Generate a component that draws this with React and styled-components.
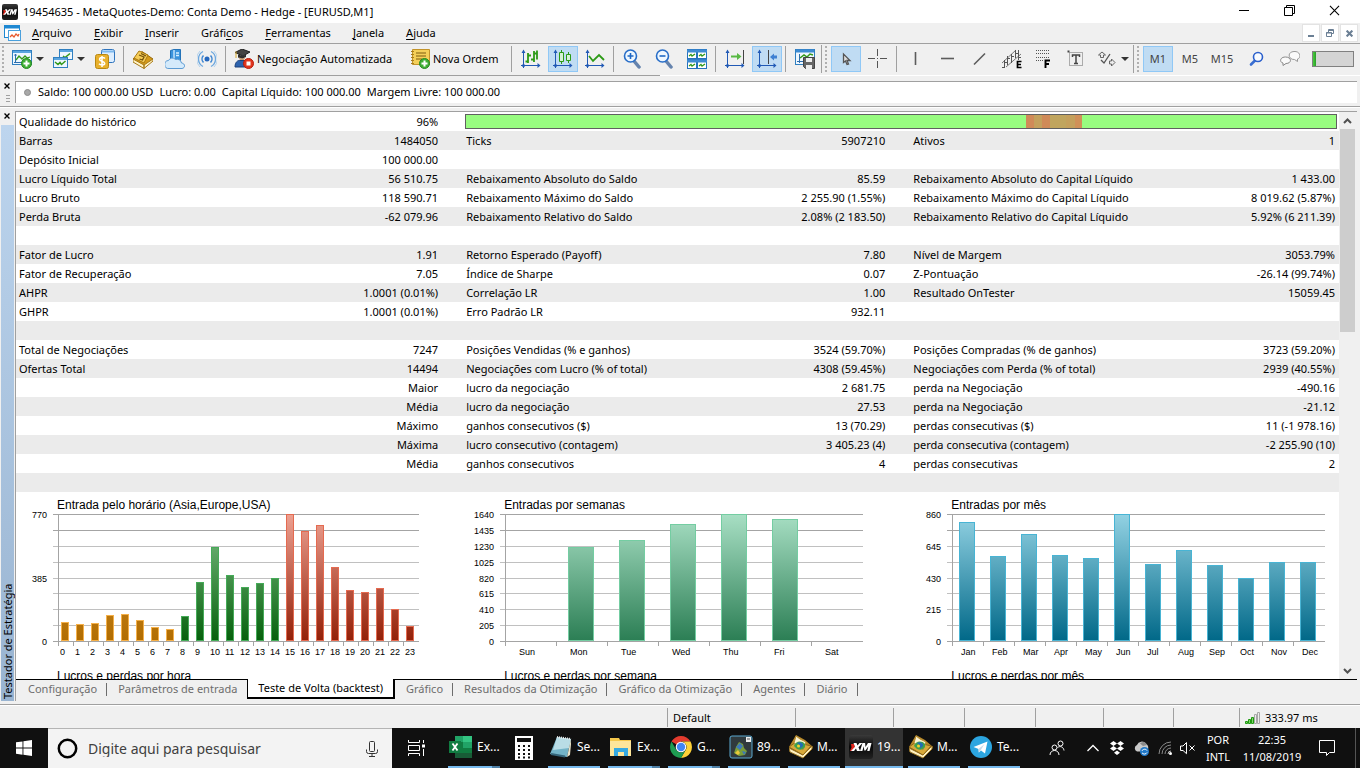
import React from "react";
import styled, { createGlobalStyle, css } from "styled-components";

const GlobalStyle = createGlobalStyle`
  * {
    box-sizing: border-box;
  }

  body {
    background: #f0f0f0;
    color: #000000;
    font-family: "Noto Sans", "Open Sans", sans-serif;
    font-size: 11px;
    line-height: 16px;
    margin: 0;
    overflow: hidden;
  }

  button,
  input {
    background: none;
    border: 0;
    color: inherit;
    font: inherit;
    margin: 0;
    padding: 0;
  }

  svg {
    display: block;
    flex: none;
  }
`;

const Shell = styled.div`
  display: flex;
  flex-direction: column;
  height: 100vh;
`;

/* ---------- title bar and menu ---------- */

const TitleBar = styled.header`
  align-items: center;
  background: #ffffff;
  display: flex;
  flex: none;
  height: 23px;
  padding: 0 3px 0 2px;
`;

const Title = styled.h1`
  flex: 1;
  font-size: 11px;
  font-weight: 400;
  margin: 0 0 0 5px;
`;

const WindowButton = styled.button`
  align-items: center;
  display: flex;
  height: 23px;
  justify-content: center;
  padding-bottom: 2px;
  width: 45px;
`;

const MenuBar = styled.nav`
  align-items: center;
  border-bottom: 1px solid #a0a0a0;
  display: flex;
  flex: none;
  height: 21px;
  padding: 0 2px 0 4px;
`;

const MenuItem = styled.button`
  height: 20px;
  padding: 0 11px;

  &:first-of-type {
    margin-left: -1px;
  }

  u {
    text-underline-offset: 2px;
  }
`;

const ChildControls = styled.div`
  display: flex;
  gap: 1px;
  margin-left: auto;
`;

const ChildButton = styled.button`
  align-items: center;
  background: #ffffff;
  border: 1px solid #e3e3e3;
  display: flex;
  height: 18px;
  justify-content: center;
  width: 18px;
`;

/* ---------- toolbar ---------- */

const ToolbarRow = styled.div`
  align-items: center;
  background: linear-gradient(90deg, #a0a0a0 48.5%, #ffffff 48.5%) 0 31px / 100% 1px no-repeat;
  display: flex;
  flex: none;
  height: 33px;
  padding-bottom: 3px;
`;

const ToolGroup = styled.div`
  align-items: center;
  border-right: ${({ $last }) => ($last ? "0" : "1px solid #a0a0a0")};
  display: flex;
  height: 28px;
`;

const Grip = styled.span`
  background-image: radial-gradient(circle, #b0b0b0 1px, transparent 1px);
  background-size: 4px 4px;
  height: 28px;
  margin: 0 2px 0 ${({ $wide }) => ($wide ? "2px" : "1px")};
  width: 4px;
`;

const Tool = styled.button`
  align-items: center;
  display: flex;
  height: 26px;
  justify-content: center;
  margin: 0 1px;
  width: 30px;
  ${({ $active }) =>
    $active &&
    css`
      background: #c0dcf3;
      box-shadow: inset 0 0 0 1px #90c8f6;
    `}
`;

const DropTool = styled(Tool)`
  gap: 4px;
  width: 39px;
`;

const LabelTool = styled(Tool)`
  gap: 3px;
  justify-content: flex-start;
  min-width: ${({ $wide }) => ($wide ? "174px" : "102px")};
  padding-left: 4px;
  white-space: nowrap;
  width: auto;
`;

const PeriodTool = styled(Tool)`
  color: #444444;
`;

const Extras = styled.div`
  align-items: center;
  display: flex;
  gap: 1px;
  padding-left: 3px;
`;

const Divider = styled.span`
  background: #a0a0a0;
  height: 26px;
  margin: 0 3px 0 2px;
  width: 1px;
`;

const Caret = styled.span`
  border: 4px solid transparent;
  border-bottom: 0;
  border-top-color: #333333;
  width: 0;
`;

const TrafficMeter = styled.div`
  background: #d4d4d4;
  border: 1px solid #808080;
  height: 16px;
  margin-left: 5px;
  width: 42px;

  span {
    background: linear-gradient(90deg, #48d03c, #2a9a2a);
    display: block;
    height: 14px;
    width: 3px;
  }
`;

/* ---------- docked panels ---------- */

const Dock = styled.section`
  border-bottom: ${({ $fill }) => ($fill ? "0" : "1px solid #a0a0a0")};
  box-shadow: ${({ $fill }) => ($fill ? "inset 0 1px 0 #ffffff" : "none")};
  display: flex;
  flex: ${({ $fill }) => ($fill ? "1" : "none")};
  min-height: 0;
  padding: 4px 3px 3px 0;
`;

const DockHandle = styled.div`
  align-items: center;
  display: flex;
  flex: none;
  flex-direction: column;
  width: 15px;
`;

const DockClose = styled.button`
  display: flex;
  padding: 2px 2px 6px 0;
`;

const DockLines = styled.span`
  background: repeating-linear-gradient(#a0a0a0 0 1px, transparent 1px 3px);
  height: 7px;
  width: 4px;
`;

const DockTitle = styled.div`
  align-self: stretch;
  background: linear-gradient(#99b4d1, #bdd5ee);
  display: flex;
  flex: 1;
  justify-content: flex-start;
  line-height: 13px;
  margin: 0 1px;
  padding-top: 2px;
  transform: rotate(180deg);
  writing-mode: vertical-rl;
`;

const AccountLine = styled.div`
  align-items: center;
  background: #ffffff;
  border-left: 1px solid #a0a0a0;
  border-top: 1px solid #a0a0a0;
  display: flex;
  flex: 1;
  gap: 7px;
  height: 22px;
  padding: 0 0 1px 8px;
  white-space: nowrap;
`;

const AccountFigures = styled.div`
  display: flex;
  gap: 6px;
`;

const Tester = styled.div`
  border-left: 1px solid #a0a0a0;
  border-top: 1px solid #a0a0a0;
  display: flex;
  flex: 1;
  flex-direction: column;
  min-width: 0;
`;

const ReportArea = styled.div`
  display: flex;
  flex: 1;
  min-height: 0;
  padding-right: 1px;
`;

const Report = styled.div`
  background: #ffffff;
  flex: 1;
  min-width: 0;
  overflow: hidden;
`;

const ReportTable = styled.table`
  border-collapse: collapse;
  table-layout: fixed;
  width: 100%;

  tr {
    height: 19px;
  }

  tr:nth-child(even) {
    background: #ebebeb;
  }

  th,
  td {
    font-weight: 400;
    height: 19px;
    line-height: 19px;
    padding: 0 0 0 3px;
    text-align: left;
    white-space: nowrap;
  }

  td {
    padding-right: 25px;
    text-align: right;
  }

  td:last-child {
    padding-right: 4px;
  }
`;

const Col = styled.col`
  width: ${({ $width }) => $width};
`;

const QualityCell = styled.td`
  &&& {
    padding: 0 2px;
  }
`;

const QualityBar = styled.div`
  background: linear-gradient(
    90deg,
    #98fc80 0 64.4%,
    #d08a58 64.4% 65.3%,
    #c4a05c 65.3% 66.2%,
    #d08a58 66.2% 67.1%,
    #c0a55e 67.1% 69%,
    #c4a05c 69% 70%,
    #d09058 70% 70.8%,
    #98fc80 70.8%
  );
  border: 1px solid #606060;
  height: 15px;
`;

const ChartGrid = styled.div`
  display: grid;
  grid-template-columns: 33.8% 33.8% 1fr;
`;

const ChartBox = styled.figure`
  height: 171px;
  margin: 0;
  overflow: hidden;
  padding-top: 5px;

  svg {
    font-family: "Liberation Sans", Arial, sans-serif;
    font-size: 9px;
    overflow: visible;
  }
`;

const ChartTitle = styled.figcaption`
  font-family: "Liberation Sans", Arial, sans-serif;
  font-size: 12px;
  padding-left: 41px;
`;

const Scrollbar = styled.div`
  background: #f0f0f0;
  display: flex;
  flex: none;
  flex-direction: column;
  margin: 0 1px;
  width: 15px;
`;

const ScrollArrow = styled.button`
  align-items: center;
  display: flex;
  flex: none;
  height: 17px;
  justify-content: center;
`;

const ScrollTrack = styled.div`
  flex: 1;
`;

const ScrollThumb = styled.div`
  background: #cdcdcd;
  height: 38%;
`;

const TabBar = styled.div`
  border-top: 1px solid #000000;
  color: #6d6d6d;
  display: flex;
  flex: none;
  height: 22px;
  padding-left: 1px;
`;

const Tab = styled.button`
  height: 18px;
  padding: 0 10px 1px 11px;
  position: relative;
  white-space: nowrap;

  &::after {
    background: #6d6d6d;
    content: "";
    height: 13px;
    position: absolute;
    right: 0;
    top: 3px;
    width: 1px;
  }

  ${({ $beforeActive }) =>
    $beforeActive &&
    css`
      &::after {
        display: none;
      }
    `}

  ${({ $active }) =>
    $active &&
    css`
      background: #ffffff;
      border: 2px solid #000000;
      border-top: 0;
      border-left-width: 1px;
      color: #000000;
      height: 20px;
      margin-top: -1px;
      padding: 0 10px;

      &::after {
        display: none;
      }
    `}
`;

/* ---------- status bar ---------- */

const StatusBar = styled.footer`
  border-top: 1px solid #a0a0a0;
  box-shadow: inset 0 1px 0 #ffffff;
  display: flex;
  flex: none;
  height: 24px;
  padding-top: 3px;
`;

const StatusCell = styled.div`
  align-items: center;
  border-left: ${({ $plain }) => ($plain ? "0" : "1px solid #a0a0a0")};
  display: flex;
  flex: ${({ $width }) => ($width ? `0 0 ${$width}px` : "1")};
  gap: 4px;
  height: 19px;
  padding: 0 5px;
`;

/* ---------- taskbar ---------- */

const Taskbar = styled.footer`
  align-items: stretch;
  background: #101010;
  color: #ffffff;
  display: flex;
  flex: none;
  height: 40px;
`;

const TaskButton = styled.button`
  align-items: center;
  display: flex;
  justify-content: center;
  width: ${({ $width }) => $width}px;
`;

const Search = styled.label`
  align-items: center;
  background: #f3f3f3;
  border-top: 1px solid #b4b4b4;
  color: #333333;
  display: flex;
  flex: 0 0 344px;
  gap: 10px;
  padding: 0 13px 0 9px;

  input {
    flex: 1;
    font-size: 14px;
    min-width: 0;
    outline: 0;
  }

  input::placeholder {
    color: #404040;
    opacity: 1;
  }
`;

const Apps = styled.div`
  display: flex;
  padding-left: 4px;
`;

const AppButton = styled.button`
  align-items: center;
  background: ${({ $active }) => ($active ? "#333333" : "none")};
  border-bottom: 2px solid #76b9ed;
  display: flex;
  font-size: 12px;
  gap: 4px;
  height: 40px;
  margin: 0 ${({ $active }) => ($active ? "1px" : "4px")};
  padding: 0 ${({ $active }) => ($active ? "4px" : "1px")};
  white-space: nowrap;
  width: ${({ $active }) => ($active ? "58px" : "52px")};
  ${({ $stacked }) =>
    $stacked &&
    css`
      border-image: linear-gradient(90deg, #76b9ed 83%, #4e7fa5 83%) 1;
      border-width: 0 0 2px;
      border-style: solid;
    `}
`;

const Tray = styled.div`
  align-items: center;
  border-right: 1px solid #555555;
  display: flex;
  margin-left: auto;
  margin-right: 4px;
`;

const TrayButton = styled.button`
  align-items: center;
  display: flex;
  height: 40px;
  justify-content: center;
  width: ${({ $width }) => $width || 24}px;
`;

const TrayText = styled.div`
  font-size: 11px;
  line-height: 17px;
  text-align: center;
  width: ${({ $width }) => $width}px;
`;

/* ---------- icons ---------- */

const Icon = ({ size = 20, w, h, box, children }) => (
  <svg
    width={w || size}
    height={h || size}
    viewBox={box || `0 0 ${w || size} ${h || size}`}
    fill="none"
    aria-hidden="true"
  >
    {children}
  </svg>
);

const XmMark = ({ size }) => (
  <Icon size={size} box="0 0 24 24">
    <defs>
      <linearGradient id="xm" x1="0" y1="0" x2="0" y2="1">
        <stop offset="0" stopColor="#3a3a3a" />
        <stop offset=".5" stopColor="#080808" />
        <stop offset="1" stopColor="#222222" />
      </linearGradient>
    </defs>
    <rect width="24" height="24" rx="3" fill="url(#xm)" />
    <path d="M2 9h3l1 3-3 4H1l1.500-3.500z" fill="#e2261c" />
    <path d="M4.500 8h3l1 2.500L10.500 8h3l-4 4.200 1.600 3.800H8l-1-2.400L5 16H2l4-4.300zM13.500 8h2.600l.4 4L19 8h3.500l-2 8h-2.300l1.200-4.800-2.900 4.400h-1.200l-.6-4.400-1.300 4.800H11z" fill="#ffffff" />
  </Icon>
);

const Axis = ({ children }) => (
  <Icon>
    <path d="M2.500 2v17M0 16.500h19" stroke="#2159b5" />
    <path d="M.5 4l2-3.500 2 3.500zM16.500 14l3 2.500-3 2.500z" fill="#2159b5" />
    <circle cx="2.500" cy="16.500" r="1.500" fill="#2159b5" />
    {children}
  </Icon>
);

const PlusBadge = () => (
  <g>
    <circle cx="14.500" cy="14.500" r="5" fill="#3fae34" stroke="#24891f" />
    <path d="M14.500 11.500v6M11.500 14.500h6" stroke="#fff" strokeWidth="2" />
  </g>
);

const NewChartIcon = () => (
  <Icon>
    <rect x=".5" y="1.500" width="19" height="14" fill="#eef7ff" stroke="#2f7fc0" />
    <path d="M1 3h18" stroke="#5aa5df" strokeWidth="2" />
    <path d="M3.500 5v9M2 13.500h14M2.500 6.500l1-1.500 1 1.500" stroke="#2f6fae" />
    <path d="M4 11l3-4 3 3 3-3 2 2 3-1" stroke="#33991a" strokeWidth="1.300" />
    <PlusBadge />
  </Icon>
);

const WindowsIcon = () => (
  <Icon>
    <rect x="6.500" y=".5" width="13" height="10" fill="#eef7ff" stroke="#2f7fc0" />
    <path d="M7 2h12" stroke="#5aa5df" strokeWidth="2" />
    <path d="M10 7l2 1.500L17 4.500" stroke="#33991a" strokeWidth="1.500" />
    <rect x=".5" y="8.500" width="14" height="10" fill="#eef7ff" stroke="#2f7fc0" />
    <path d="M1 10h13" stroke="#5aa5df" strokeWidth="2" />
    <path d="M2 13l3 2.500 2-2 1.500 2 4-3.500" stroke="#33991a" strokeWidth="1.500" />
  </Icon>
);

const SymbolsIcon = () => (
  <Icon>
    <rect x="6.500" y=".5" width="13" height="13" rx="2" fill="#ddeeff" stroke="#2f74bd" />
    <path d="M7 2.500h12" stroke="#7cb9ee" strokeWidth="2" />
    <rect x=".5" y="5.500" width="13" height="14" rx="2" fill="#e8b02c" stroke="#b98812" />
    <path d="M10 9.500C8.500 8 4.500 8.200 4.600 10.500c.1 2.200 5 1.300 5.100 3.800.1 2-4 2.200-5.700.4M7 7v11" stroke="#fff" strokeWidth="1.500" />
  </Icon>
);

const BookIcon = () => (
  <Icon>
    <path d="M0 10l9-7.500L20 10l-9 8z" fill="#d59b1b" stroke="#96690c" />
    <path d="M0 10v3l11 6.500v-3.500zM11 16v3.500l9-7.500v-2z" fill="#fff3c7" stroke="#a87a16" />
    <path d="M1 9l5-7 9 4-4 8z" fill="#f5cd58" stroke="#aa7a12" />
    <path d="M6 6l5 2-1.500 3-3-1M8 4.500l5 2.500" stroke="#71500c" strokeWidth="1.300" />
  </Icon>
);

const CloudServerIcon = () => (
  <Icon>
    <path d="M5.500 1.500L9 .5h6.500v11h-10z" fill="#3b94dd" stroke="#2473b8" />
    <path d="M9 1v10M11 4h3M11 6.500h3" stroke="#d7efff" strokeWidth="1.300" />
    <path d="M4 19.500a4 4 0 01-.5-8 4.200 4.200 0 017-1 4.500 4.500 0 016 3.500c4 .5 4 5 .5 5.500z" fill="#d4eafb" stroke="#5c9bd3" />
  </Icon>
);

const SignalIcon = () => (
  <Icon>
    <circle cx="10" cy="10" r="2.500" fill="#2567bd" />
    <path d="M6.500 6.500a5 5 0 000 7M13.500 6.500a5 5 0 010 7" stroke="#3f87d2" strokeWidth="1.600" />
    <path d="M6 2.500a8.500 8.500 0 000 15M14 2.500a8.500 8.500 0 010 15" stroke="#6da8df" strokeWidth="1.300" />
    <path d="M3 2a11 11 0 000 16M17 2a11 11 0 010 16" stroke="#b3d1ec" />
  </Icon>
);

const AlgoIcon = () => (
  <Icon>
    <path d="M1 3.500L8 0l8 3-7 4z" fill="#444" stroke="#222" />
    <path d="M4 5.500v3l4 1.500 4-2V5.500L9 7z" fill="#2e2e2e" />
    <path d="M5 8.500c0 4 6 4 6 0l-2.500 1z" fill="#c89c72" />
    <path d="M1 18c0-5 3-7 5-6.500h5c2 0 4 2 4 6.500z" fill="#2d63ae" stroke="#1c417a" />
    <path d="M2 2.500V9" stroke="#d4a72b" />
    <circle cx="14.500" cy="14.500" r="5" fill="#e2361f" stroke="#b81d0d" />
    <rect x="12.500" y="12.500" width="4" height="4" fill="#fff" />
  </Icon>
);

const NewOrderIcon = () => (
  <Icon>
    <path d="M2.500.500h17v15h-17z" fill="#f4cf59" stroke="#c2932a" />
    <path d="M6 4h10M6 7h10M6 10h6" stroke="#7d5c11" />
    <path d="M1 2.500h3M1 5.500h3M1 8.500h3M1 11.500h3M1 14.500h3" stroke="#a87d1c" />
    <PlusBadge />
  </Icon>
);

const MagnifierIcon = ({ minus }) => (
  <Icon>
    <path d="M11 12l5 6" stroke="#6583ad" strokeWidth="3.500" strokeLinecap="round" />
    <circle cx="7.500" cy="7" r="6" fill="#eef7ff" stroke="#276dc8" strokeWidth="1.600" />
    <path d={minus ? "M4.500 7h6" : "M4.500 7h6M7.500 4v6"} stroke="#1f67c4" strokeWidth="1.600" />
  </Icon>
);

const TileIcon = () => (
  <Icon>
    {[0, 10].map((x) =>
      [0, 10].map((y) => (
        <g key={`${x}-${y}`}>
          <rect x={x + 0.5} y={y + 0.5} width="9" height="9" fill="#fff" stroke="#2472bd" />
          <path d={`M${x} ${y + 2}h10`} stroke="#3d8bd2" strokeWidth="3" />
          <path d={`M${x + 2} ${y + 7}l2-1.500 1 1.500 3-2`} stroke="#2f991a" strokeWidth="1.300" />
        </g>
      )),
    )}
  </Icon>
);

const TemplateIcon = () => (
  <Icon>
    <rect x=".5" y=".5" width="19" height="15" fill="#eef7ff" stroke="#2f7fc0" />
    <path d="M1 2h18" stroke="#3c8bd3" strokeWidth="3" />
    <path d="M4.500 5v9M2 12.500h6" stroke="#2f6fae" />
    <path d="M5 9l4-3 3 2 3-3 3 1" stroke="#33991a" strokeWidth="1.500" />
    <path d="M8.500 8.500h11v11h-9l-2-2z" fill="#666" stroke="#444" />
    <path d="M11 9h6v4h-6zM11 16h6v4h-6z" fill="#eee" />
  </Icon>
);

const CursorIcon = () => (
  <Icon>
    <path d="M7.500 5v8.500l2-1.500 1.500 3.500 1.500-.5-1.500-3.500h3z" fill="#ddd" stroke="#555" strokeWidth="1.300" />
  </Icon>
);

const CrosshairIcon = () => (
  <Icon>
    <path d="M9.500 0v7M9.500 12v7M0 9.500h7M12 9.500h7M9 9.500h1" stroke="#555" />
  </Icon>
);

const StrokeIcon = ({ d }) => (
  <Icon>
    <path d={d} stroke="#5c5c5c" strokeWidth="1.600" />
  </Icon>
);

const ChannelIcon = () => (
  <Icon>
    <path d="M0 14L14 1M4 18L19 5" stroke="#777" />
    <path d="M2.500 19v-8M0 18.500h2M5.500 16V7M3 13.500h2M5 9.500h3M9.500 14V5M9 7.500h3M13.500 9V1M13 4.500h3M16.500 11V1M16 8.500h3" stroke="#555" />
    <path d="M19.500 12.500H15.500v6h4M15 15.500h4" stroke="#000" strokeWidth="1.700" />
  </Icon>
);

const FiboIcon = () => (
  <Icon>
    <path d="M2 1.500h13M2 4.500h13M2 8.500h13M2 11.500h8" stroke="#555" strokeDasharray="1 1" />
    <path d="M16 11.500h-4.500V19M11.500 15H15" stroke="#000" strokeWidth="1.900" />
  </Icon>
);

const TextToolIcon = () => (
  <Icon>
    <rect x="3.500" y="3.500" width="13" height="13" stroke="#666" strokeDasharray="1 1" />
    <path d="M1.500 1.500h2v2h-2z" fill="#444" />
    <path d="M6.500 8V6h7v2M10 6v8M8 14.500h4" stroke="#444" strokeWidth="1.500" />
  </Icon>
);

const ArrowsIcon = () => (
  <Icon>
    <path d="M5 3L1.500 6h2v2.500h3V6h2zM14.500 10v2h-2v3h2v2l3.500-3.500z" fill="#eee" stroke="#666" />
    <path d="M4 11l3 3 6-9" stroke="#555" strokeWidth="1.300" />
  </Icon>
);

const FindIcon = () => (
  <Icon>
    <path d="M8 11.500l-4 4" stroke="#3a6ed1" strokeWidth="2.600" strokeLinecap="round" />
    <circle cx="11" cy="8" r="4.500" fill="#f8fbff" stroke="#2b60cc" strokeWidth="1.600" />
  </Icon>
);

const ChatIcon = () => (
  <Icon>
    <path d="M14 2.500c7-.5 7 7 3.500 7.500v2.500l-3-2c-6 .5-8-7.500-.5-8z" fill="#fafafa" stroke="#999" />
    <path d="M5.500 8c-6 0-6 5.500-2.500 6v2.500L6 14.500c6 0 6-6.500-.5-6.500z" fill="#fafafa" stroke="#888" />
  </Icon>
);

const CloseMark = ({ size = 7, color = "#000", width = 1.8 }) => (
  <Icon size={size} box="0 0 8 8">
    <path d="M.7.700l6.600 6.600M7.300.700L.7 7.300" stroke={color} strokeWidth={width} />
  </Icon>
);

const ExpertIcon = () => (
  <Icon size={24}>
    <path d="M0 12L7 0l9 5 8 7-10 11z" fill="#b98a28" />
    <path d="M0 13l1 4 13 6 9-9v-3l-9 9z" fill="#fff1c2" stroke="#9b7625" />
    <path d="M0 12l7-5 15 4-8 9z" fill="#d8a93a" stroke="#8a651a" />
    <path d="M5 8L7 1l4 3 6 3-3 8z" fill="#fbf3d4" stroke="#b68c32" />
    <path d="M5 11c1-5 8-6 11-2 1 4-3 7-8 5z" fill="#3fa14c" />
    <path d="M8 8c3-2 7 0 6 3l-3 3c1-3-1-4-3-6z" fill="#226fb4" />
    <circle cx="9.500" cy="11" r="1.500" fill="#f4d22b" />
  </Icon>
);

/* ---------- data ---------- */

const MENU = [
  ["", "A", "rquivo"],
  ["", "E", "xibir"],
  ["", "I", "nserir"],
  ["Gráfi", "c", "os"],
  ["", "F", "erramentas"],
  ["", "J", "anela"],
  ["", "A", "juda"],
];

const FIGURES = [
  "Saldo: 100 000.00 USD",
  "Lucro: 0.00",
  "Capital Líquido: 100 000.00",
  "Margem Livre: 100 000.00",
];

const ROWS = [
  ["Barras", "1484050", "Ticks", "5907210", "Ativos", "1"],
  ["Depósito Inicial", "100 000.00", "", "", "", ""],
  ["Lucro Líquido Total", "56 510.75", "Rebaixamento Absoluto do Saldo", "85.59", "Rebaixamento Absoluto do Capital Líquido", "1 433.00"],
  ["Lucro Bruto", "118 590.71", "Rebaixamento Máximo do Saldo", "2 255.90 (1.55%)", "Rebaixamento Máximo do Capital Líquido", "8 019.62 (5.87%)"],
  ["Perda Bruta", "-62 079.96", "Rebaixamento Relativo do Saldo", "2.08% (2 183.50)", "Rebaixamento Relativo do Capital Líquido", "5.92% (6 211.39)"],
  ["", "", "", "", "", ""],
  ["Fator de Lucro", "1.91", "Retorno Esperado (Payoff)", "7.80", "Nível de Margem", "3053.79%"],
  ["Fator de Recuperação", "7.05", "Índice de Sharpe", "0.07", "Z-Pontuação", "-26.14 (99.74%)"],
  ["AHPR", "1.0001 (0.01%)", "Correlação LR", "1.00", "Resultado OnTester", "15059.45"],
  ["GHPR", "1.0001 (0.01%)", "Erro Padrão LR", "932.11", "", ""],
  ["", "", "", "", "", ""],
  ["Total de Negociações", "7247", "Posições Vendidas (% e ganhos)", "3524 (59.70%)", "Posições Compradas (% de ganhos)", "3723 (59.20%)"],
  ["Ofertas Total", "14494", "Negociações com Lucro (% of total)", "4308 (59.45%)", "Negociações com Perda (% of total)", "2939 (40.55%)"],
  ["", "Maior", "lucro da negociação", "2 681.75", "perda na Negociação", "-490.16"],
  ["", "Média", "lucro da negociação", "27.53", "perda na Negociação", "-21.12"],
  ["", "Máximo", "ganhos consecutivos ($)", "13 (70.29)", "perdas consecutivas ($)", "11 (-1 978.16)"],
  ["", "Máxima", "lucro consecutivo (contagem)", "3 405.23 (4)", "perda consecutiva (contagem)", "-2 255.90 (10)"],
  ["", "Média", "ganhos consecutivos", "4", "perdas consecutivas", "2"],
  ["", "", "", "", "", ""],
];

const asia = { id: "asia", top: "#e0a040", bottom: "#b06c00", edge: "#f5b049" };
const europe = { id: "europe", top: "#82c289", bottom: "#06600c", edge: "#45ab58" };
const usa = { id: "usa", top: "#eda192", bottom: "#922008", edge: "#e56a50" };
const week = { id: "week", top: "#a8dfc4", bottom: "#2b7e54", edge: "#74cda2" };
const month = { id: "month", top: "#93d2e3", bottom: "#006888", edge: "#48b4d4" };

// Bar heights are in pixels of the 127px plot.
const CHARTS = [
  {
    title: "Entrada pelo horário (Asia,Europe,USA)",
    next: "Lucros e perdas por hora",
    end: 403,
    step: 15,
    barX: 3,
    barWidth: 8,
    labelX: 2,
    yLabels: ["770", "", "", "", "385", "", "", "", "0"],
    xLabels: Array.from({ length: 24 }, (_, hour) => String(hour)),
    bars: [19, 17, 18, 26, 27, 21, 14, 12, 25, 59, 94, 66, 54, 58, 63, 127, 110, 116, 74, 51, 49, 53, 32, 15],
    tone: (i) => (i < 8 ? asia : i < 15 ? europe : usa),
  },
  {
    title: "Entradas por semanas",
    next: "Lucros e perdas por semana",
    end: 400,
    step: 51,
    barX: 12,
    barWidth: 26,
    labelX: 14,
    yLabels: ["1640", "1435", "1230", "1025", "820", "615", "410", "205", "0"],
    xLabels: ["Sun", "Mon", "Tue", "Wed", "Thu", "Fri", "Sat"],
    bars: [0, 94, 101, 117, 127, 122, 0],
    tone: () => week,
  },
  {
    title: "Entradas por mês",
    next: "Lucros e perdas por mês",
    end: 415,
    step: 31,
    barX: 7,
    barWidth: 16,
    labelX: 9,
    yLabels: ["860", "", "645", "", "430", "", "215", "", "0"],
    xLabels: ["Jan", "Feb", "Mar", "Apr", "May", "Jun", "Jul", "Aug", "Sep", "Oct", "Nov", "Dec"],
    bars: [119, 85, 107, 86, 83, 127, 77, 91, 76, 63, 79, 79],
    tone: () => month,
  },
];

const TABS = [
  "Configuração",
  "Parâmetros de entrada",
  "Teste de Volta (backtest)",
  "Gráfico",
  "Resultados da Otimização",
  "Gráfico da Otimização",
  "Agentes",
  "Diário",
];

const ACTIVE_TAB = 2;

/* ---------- parts ---------- */

const BarChart = ({ chart }) => {
  const axisX = 42;
  const top = 1;
  const base = 128;
  return (
    <svg width="428" height="148" role="img" aria-label={chart.title}>
      <defs>
        {[...new Set(chart.bars.map((_, i) => chart.tone(i)))].map((tone) => (
          <linearGradient key={tone.id} id={tone.id} gradientUnits="userSpaceOnUse" x1="0" x2="0" y1={top} y2={base}>
            <stop offset="0" stopColor={tone.top} />
            <stop offset="1" stopColor={tone.bottom} />
          </linearGradient>
        ))}
      </defs>
      {chart.yLabels.map((label, i) => {
        const y = Math.round(top + (i * 127) / 8);
        return (
          <g key={i}>
            <path d={`M37 ${y + 0.5}H${chart.end}`} stroke={i % 8 < 2 ? "#a4a4a4" : "#c0c0c0"} />
            <text x="31" y={y + 4} textAnchor="end">
              {label}
            </text>
          </g>
        );
      })}
      <path d={`M${axisX + 0.5} ${top}V${base}`} stroke="#a4a4a4" />
      {chart.bars.map((height, i) => {
        const x = axisX + i * chart.step;
        const tone = chart.tone(i);
        return (
          <g key={i}>
            <path d={`M${x + 0.5} ${base}v5`} stroke="#a4a4a4" />
            {height > 0 && (
              <rect
                x={x + chart.barX + 0.5}
                y={base - height + 0.5}
                width={chart.barWidth - 1}
                height={height - 1}
                fill={`url(#${tone.id})`}
                stroke={tone.edge}
              />
            )}
            <text x={x + chart.labelX} y={base + 14}>
              {chart.xLabels[i]}
            </text>
          </g>
        );
      })}
    </svg>
  );
};

const MainTools = () => (
  <ToolGroup>
    <Grip />
    <DropTool aria-label="Novo gráfico"><NewChartIcon /><Caret /></DropTool>
    <DropTool aria-label="Perfis"><WindowsIcon /><Caret /></DropTool>
    <Tool aria-label="Símbolos"><SymbolsIcon /></Tool>
    <Divider />
    <Tool aria-label="MetaEditor"><BookIcon /></Tool>
    <Tool aria-label="VPS"><CloudServerIcon /></Tool>
    <Tool aria-label="Sinais"><SignalIcon /></Tool>
    <Divider />
    <LabelTool $wide><AlgoIcon />Negociação Automatizada</LabelTool>
    <LabelTool><NewOrderIcon />Nova Ordem</LabelTool>
    <Divider />
    <Tool aria-label="Barras">
      <Axis><path d="M7 4v10M4.500 12.500H7M7 6.500h3M13 2v11M10 10.500h3M16 1.500v9M13 4.500h3" stroke="#2c9a16" strokeWidth="1.800" /></Axis>
    </Tool>
    <Tool $active aria-label="Velas">
      <Axis><path d="M8.500 1v14M15.500 3v11" stroke="#2c9a16" /><path d="M6.500 3.500h4v9h-4zM13.500 5.500h4v6h-4z" fill="#d7f2d5" stroke="#2c9a16" /></Axis>
    </Tool>
    <Tool aria-label="Linha">
      <Axis><path d="M4 7l4 5 6-6 5 5" stroke="#2c9a16" strokeWidth="1.800" /></Axis>
    </Tool>
    <Divider />
    <Tool aria-label="Ampliar"><MagnifierIcon /></Tool>
    <Tool aria-label="Reduzir"><MagnifierIcon minus /></Tool>
    <Tool aria-label="Lado a lado"><TileIcon /></Tool>
    <Divider />
    <Tool aria-label="Rolagem automática">
      <Axis><path d="M18.500 1v14" stroke="#444" /><path d="M6 6.500h6V4l4.500 3.500L12 11V8.500H6z" fill="#58b944" /></Axis>
    </Tool>
    <Tool $active aria-label="Deslocar gráfico">
      <Axis><path d="M11.500 1v14" stroke="#444" /><path d="M20 6.500h-3V4.500l-4 3.500 4 3.500V9.500h3z" fill="#3f80d2" /></Axis>
    </Tool>
    <Divider />
    <Tool aria-label="Modelos"><TemplateIcon /></Tool>
  </ToolGroup>
);

const DrawingTools = () => (
  <ToolGroup>
    <Grip $wide />
    <Tool $active aria-label="Cursor"><CursorIcon /></Tool>
    <Tool aria-label="Mira"><CrosshairIcon /></Tool>
    <Divider />
    <Tool aria-label="Linha vertical"><StrokeIcon d="M9.500 3v13" /></Tool>
    <Tool aria-label="Linha horizontal"><StrokeIcon d="M3 9.500h13" /></Tool>
    <Tool aria-label="Linha de tendência"><StrokeIcon d="M4 15.500L15 4.500" /></Tool>
    <Tool aria-label="Canal"><ChannelIcon /></Tool>
    <Tool aria-label="Fibonacci"><FiboIcon /></Tool>
    <Tool aria-label="Texto"><TextToolIcon /></Tool>
    <DropTool aria-label="Setas"><ArrowsIcon /><Caret /></DropTool>
  </ToolGroup>
);

const PeriodTools = () => (
  <ToolGroup $last>
    <Grip $wide />
    <PeriodTool $active>M1</PeriodTool>
    <PeriodTool>M5</PeriodTool>
    <PeriodTool>M15</PeriodTool>
    <Extras>
      <Tool aria-label="Pesquisar"><FindIcon /></Tool>
      <Tool aria-label="Chat"><ChatIcon /></Tool>
      <TrafficMeter><span /></TrafficMeter>
    </Extras>
  </ToolGroup>
);

const APPS = [
  {
    label: "Ex...",
    stacked: true,
    icon: (
      <Icon size={24}>
        <path d="M6 1h17v22H6z" fill="#21a366" />
        <path d="M14 1h9v6h-9z" fill="#33c481" />
        <path d="M6 7h8v6H6zM6 13h17v10H6z" fill="#107c41" />
        <path d="M6 18h17v5H6z" fill="#185c37" />
        <path d="M0 6h12v12H0z" fill="#107c41" />
        <path d="M3.500 8.500l5 7M8.500 8.500l-5 7" stroke="#fff" strokeWidth="1.800" />
      </Icon>
    ),
  },
  { calculator: true },
  {
    label: "Se...",
    icon: (
      <Icon size={24}>
        <path d="M8 2l14 2-4 18L1 19z" fill="#74b4c8" />
        <path d="M8 2l14 2-2 9L4 15z" fill="#b9dde6" />
        <path d="M22 4l-4 18 3-2 1-11z" fill="#e9e2c8" />
        <path d="M8 2l14 2" stroke="#eee" strokeWidth="2" strokeDasharray="1 1" />
        <path d="M2 19l14 2.500" stroke="#35657a" strokeWidth="2" />
      </Icon>
    ),
  },
  {
    label: "Ex...",
    stacked: true,
    icon: (
      <Icon size={24}>
        <path d="M1 3h9l1 2h11v16H1z" fill="#f5c84c" />
        <path d="M1 6h21v15H1z" fill="#fde59a" />
        <path d="M5 21v-8h14v8h-4v-4H9v4z" fill="#36a9e1" />
      </Icon>
    ),
  },
  {
    label: "G...",
    stacked: true,
    icon: (
      <Icon size={24}>
        <path d="M12 12L2.500 6.500A11 11 0 0121.500 6.500L12 6.500z" fill="#e33b2e" />
        <path d="M21.500 6.500A11 11 0 0112 23l4.800-8.200A5.500 5.500 0 0012 6.500z" fill="#fdd138" />
        <path d="M2.500 6.500A11 11 0 0012 23l4.800-8.200A5.500 5.500 0 017.200 14.800z" fill="#1e9c52" />
        <circle cx="12" cy="12" r="5.300" fill="#fff" />
        <circle cx="12" cy="12" r="4.200" fill="#4285f4" />
      </Icon>
    ),
  },
  {
    label: "89...",
    icon: (
      <Icon size={24}>
        <rect x="1" y="1" width="22" height="22" rx="2" fill="#303a3e" stroke="#5aa8d0" />
        <path d="M5 18l2-6 3-5 4 2 1 4 3 3-2 4-6 1z" fill="#7a9d3b" />
        <path d="M7 12l4-4 3 3-3 4zM13 16l4 1-2 3z" fill="#3c78ba" />
        <path d="M6 18l3-3 2 3-2 2z" fill="#e8c93a" />
        <path d="M17 2h5v5h-5z" fill="#eee" />
        <path d="M18 4h3" stroke="#555" />
      </Icon>
    ),
  },
  { label: "M...", icon: <ExpertIcon /> },
  { label: "19...", active: true, icon: <XmMark size={24} /> },
  { label: "M...", icon: <ExpertIcon /> },
  {
    label: "Te...",
    icon: (
      <Icon size={24}>
        <circle cx="12" cy="12" r="11" fill="#2ca5e0" />
        <path d="M4.500 12L18.500 6.500l-2.500 12-4-3-2.200 2-.3-3.500z" fill="#fff" />
        <path d="M9.500 14l6-5-4 6.500-1.700 2z" fill="#c8daea" />
      </Icon>
    ),
  },
];

const CalculatorIcon = () => (
  <Icon w={18} h={24}>
    <path d="M0 0h18v24H0z" fill="#fff" />
    <path d="M2 2h14v4H2z" fill="#111" />
    <path d="M3 10h13M3 14h13M3 18h13M3 21.500h13" stroke="#111" strokeWidth="2" strokeDasharray="2 3" />
  </Icon>
);

const WindowsTaskbar = () => (
  <Taskbar>
    <TaskButton $width={48} aria-label="Iniciar">
      <Icon size={16}>
        <path d="M0 2.300L6.500 1.400v6.200H0zM7.400 1.200L16 0v7.600H7.400zM0 8.500h6.500v6.200L0 13.800zM7.400 8.500H16V16l-8.600-1.200z" fill="#fff" />
      </Icon>
    </TaskButton>
    <Search>
      <Icon size={21}>
        <circle cx="10.500" cy="10.500" r="8.700" stroke="#000" strokeWidth="2.500" />
      </Icon>
      <input type="text" placeholder="Digite aqui para pesquisar" aria-label="Pesquisar" />
      <Icon w={14} h={18}>
        <rect x="4.500" y="1.500" width="5" height="10" rx="1" stroke="#333" />
        <path d="M1.500 9.500v2a2 2 0 002 2h7a2 2 0 002-2v-2M7 14v2.500M4 16.500h6" stroke="#333" />
      </Icon>
    </Search>
    <TaskButton $width={48} aria-label="Visão de tarefas">
      <Icon w={18} h={16}>
        <path d="M1.500 0v2.500h11V0M1.500 16v-2.500h11V16M1.500 5.500h11v5h-11zM16.500 0v3M16.500 9v7" stroke="#fff" />
        <path d="M15 4.500h3v3h-3z" fill="#fff" />
      </Icon>
    </TaskButton>
    <Apps>
      {APPS.map((app, i) =>
        app.calculator ? (
          <TaskButton key={i} $width={40} aria-label="Calculadora">
            <CalculatorIcon />
          </TaskButton>
        ) : (
          <AppButton key={i} $active={app.active} $stacked={app.stacked}>
            {app.icon}
            {app.label}
          </AppButton>
        ),
      )}
    </Apps>
    <Tray>
      <TrayButton $width={48} aria-label="Pessoas">
        <Icon size={16}>
          <circle cx="11.500" cy="3.500" r="2.500" stroke="#fff" />
          <circle cx="5.500" cy="7.500" r="2.500" stroke="#fff" />
          <path d="M1 15c0-6 9-6 9 0M8.500 7.500c3-2 6-.5 6.500 3" stroke="#fff" />
        </Icon>
      </TrayButton>
      <TrayButton aria-label="Mostrar ícones ocultos">
        <Icon w={12} h={8}><path d="M.5 7L6 1.500 11.500 7" stroke="#fff" strokeWidth="1.300" /></Icon>
      </TrayButton>
      <TrayButton aria-label="Dropbox">
        <Icon size={16}>
          <path d="M4.500 1L8 3.500 4.500 6 1 3.500zM11.500 1L15 3.500 11.500 6 8 3.500zM4.500 6L8 8.500 4.500 11 1 8.500zM11.500 6L15 8.500 11.500 11 8 8.500zM8 10.500l3 2.200L8 15l-3-2.300z" fill="#fff" />
        </Icon>
      </TrayButton>
      <TrayButton aria-label="OneDrive">
        <Icon size={16}>
          <path d="M4 11.500a3.500 3.500 0 010-6.500 5 5 0 019-1c3 1 3 6 0 7.500z" fill="#c9c9c9" />
          <path d="M7 3.500a4 4 0 017 1.500l-4 1z" fill="#8a8a8a" />
          <circle cx="11.500" cy="11.500" r="4.500" fill="#2079c9" />
          <path d="M9 11c.5-2 4-2.500 5-.5M14 12.500c-1 2-4 2-5 .3" stroke="#fff" />
        </Icon>
      </TrayButton>
      <TrayButton aria-label="Rede">
        <Icon size={16}>
          <path d="M2 14A12 12 0 0114 2M5 14a9 9 0 019-9M8 14a6 6 0 016-6" stroke="#8b8b8b" />
          <path d="M11 14a3 3 0 013-3" stroke="#bbb" />
          <circle cx="13.500" cy="13.500" r="1.500" fill="#fff" />
        </Icon>
      </TrayButton>
      <TrayButton $width={20} aria-label="Volume">
        <Icon size={16}>
          <path d="M1.500 6v4.500H4l3.500 3.200V2.500L4 6zM10.500 5.500l5 5M15.500 5.500l-5 5" stroke="#fff" />
        </Icon>
      </TrayButton>
      <TrayText $width={42}>POR<br />INTL</TrayText>
      <TrayText $width={66}>22:35<br />11/08/2019</TrayText>
      <TrayButton $width={44} aria-label="Notificações">
        <Icon size={18}>
          <path d="M1.500 1.500h15v12h-5l-3 3v-3h-7z" stroke="#fff" />
        </Icon>
      </TrayButton>
      <TrayButton $width={6} aria-label="Mostrar área de trabalho" />
    </Tray>
  </Taskbar>
);

const App = () => (
  <Shell>
    <GlobalStyle />
    <TitleBar>
      <XmMark size={16} />
      <Title>19454635 - MetaQuotes-Demo: Conta Demo - Hedge - [EURUSD,M1]</Title>
      <WindowButton aria-label="Minimizar">
        <Icon size={11}><path d="M0 5.500h10" stroke="#000" /></Icon>
      </WindowButton>
      <WindowButton aria-label="Restaurar">
        <Icon size={11}><path d="M.5 2.500h8v8h-8zM2.500 2V.500h8v8H9" stroke="#000" /></Icon>
      </WindowButton>
      <WindowButton aria-label="Fechar">
        <CloseMark size={11} width={0.8} />
      </WindowButton>
    </TitleBar>
    <MenuBar>
      <Icon w={18} h={17}>
        <rect x=".5" y=".5" width="15" height="12" fill="#fff" stroke="#1e88d2" />
        <path d="M1 2h14" stroke="#1e88d2" strokeWidth="3" />
        <rect x="4.500" y="5.500" width="12" height="10" fill="#fff" stroke="#4aa0dc" />
        <path d="M6 12l2-2 2 2 2-3 2 2 1-2" stroke="#e8582a" strokeWidth="1.300" />
      </Icon>
      {MENU.map(([before, key, after]) => (
        <MenuItem key={after}>
          {before}
          <u>{key}</u>
          {after}
        </MenuItem>
      ))}
      <ChildControls>
        <ChildButton aria-label="Minimizar gráfico">
          <Icon size={8}><path d="M1 7h6" stroke="#6b7f94" strokeWidth="2" /></Icon>
        </ChildButton>
        <ChildButton aria-label="Restaurar gráfico">
          <Icon size={8}><path d="M.5 3.500h5v4h-5zM2.500 3V.500h5v4H6M2 1.500h6M0 4h6" stroke="#6b7f94" /></Icon>
        </ChildButton>
        <ChildButton aria-label="Fechar gráfico">
          <CloseMark color="#6b7f94" width={2.4} />
        </ChildButton>
      </ChildControls>
    </MenuBar>
    <ToolbarRow>
      <MainTools />
      <DrawingTools />
      <PeriodTools />
    </ToolbarRow>
    <Dock>
      <DockHandle>
        <DockClose aria-label="Fechar conta"><CloseMark size={6} /></DockClose>
        <DockLines />
      </DockHandle>
      <AccountLine>
        <Icon size={7}><circle cx="3.500" cy="3.500" r="3" fill="#a8a8a8" stroke="#8a8a8a" /></Icon>
        <AccountFigures>
          {FIGURES.map((figure) => (
            <span key={figure}>{figure}</span>
          ))}
        </AccountFigures>
      </AccountLine>
    </Dock>
    <Dock $fill>
      <DockHandle>
        <DockClose aria-label="Fechar testador"><CloseMark size={6} /></DockClose>
        <DockTitle>Testador de Estratégia</DockTitle>
      </DockHandle>
      <Tester>
        <ReportArea>
          <Report>
            <ReportTable>
              <colgroup>
                <Col $width="18%" />
                <Col $width="15.8%" />
                <Col $width="18%" />
                <Col $width="15.8%" />
                <Col $width="20%" />
                <Col />
              </colgroup>
              <tbody>
                <tr>
                  <th scope="row">Qualidade do histórico</th>
                  <td>96%</td>
                  <QualityCell colSpan={4}>
                    <QualityBar />
                  </QualityCell>
                </tr>
                {ROWS.map((row, i) => (
                  <tr key={i}>
                    {row.map((cell, j) =>
                      j % 2 === 0 ? <th key={j}>{cell}</th> : <td key={j}>{cell}</td>,
                    )}
                  </tr>
                ))}
              </tbody>
            </ReportTable>
            <ChartGrid>
              {CHARTS.map((chart) => (
                <ChartBox key={chart.title}>
                  <ChartTitle>{chart.title}</ChartTitle>
                  <BarChart chart={chart} />
                </ChartBox>
              ))}
              {CHARTS.map((chart) => (
                <ChartBox key={chart.next}>
                  <ChartTitle>{chart.next}</ChartTitle>
                </ChartBox>
              ))}
            </ChartGrid>
          </Report>
          <Scrollbar>
            <ScrollArrow aria-label="Rolar para cima">
              <Icon w={9} h={6}><path d="M1 5l3.500-3.500L8 5" stroke="#505050" strokeWidth="2" /></Icon>
            </ScrollArrow>
            <ScrollTrack>
              <ScrollThumb />
            </ScrollTrack>
            <ScrollArrow aria-label="Rolar para baixo">
              <Icon w={9} h={6}><path d="M1 1l3.500 3.500L8 1" stroke="#505050" strokeWidth="2" /></Icon>
            </ScrollArrow>
          </Scrollbar>
        </ReportArea>
        <TabBar>
          {TABS.map((tab, i) => (
            <Tab key={tab} $active={i === ACTIVE_TAB} $beforeActive={i === ACTIVE_TAB - 1}>
              {tab}
            </Tab>
          ))}
        </TabBar>
      </Tester>
    </Dock>
    <StatusBar>
      <StatusCell $plain />
      <StatusCell $width={128}>Default</StatusCell>
      <StatusCell $width={98} />
      <StatusCell $width={71} />
      <StatusCell $width={71} />
      <StatusCell $width={68} />
      <StatusCell $width={70} />
      <StatusCell $width={66} />
      <StatusCell $width={121}>
        <Icon w={16} h={12}>
          <path d="M.5 9.500h2v2h-2zM3.500 7.500h2v4h-2zM6.500 5.500h2v6h-2z" fill="#7fd36c" stroke="#1f9a10" />
          <path d="M9.500 2.500h2v9h-2zM12.500.500h2v11h-2z" fill="#eee" stroke="#a8a8a8" />
        </Icon>
        333.97 ms
      </StatusCell>
    </StatusBar>
    <WindowsTaskbar />
  </Shell>
);

export default App;
